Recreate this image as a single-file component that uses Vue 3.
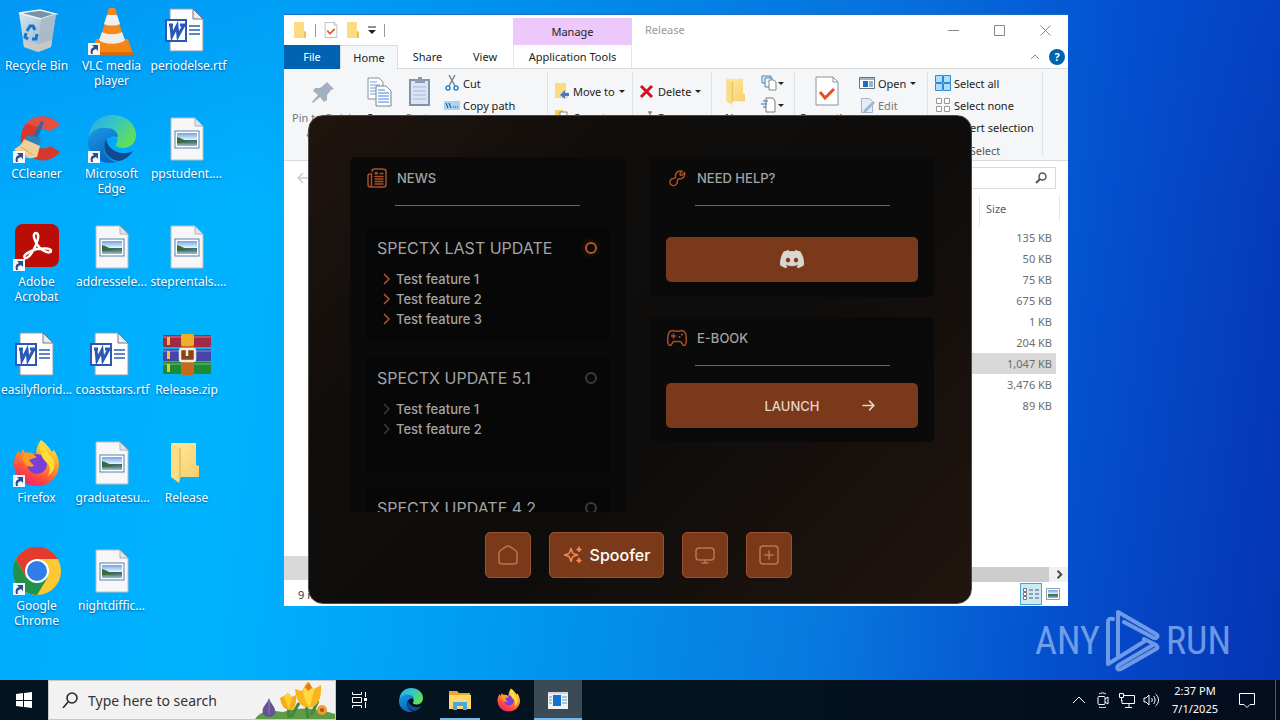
<template>
  <div class="screen">
    <!-- Shared icon sheet -->
    <svg class="sprite" aria-hidden="true">
      <defs>
        <linearGradient id="g-edge-a" x1="0" y1="0" x2="1" y2="0.6">
          <stop offset="0" stop-color="#2aa8e8" />
          <stop offset="0.5" stop-color="#35c6c8" />
          <stop offset="1" stop-color="#62e055" />
        </linearGradient>
        <linearGradient id="g-edge-b" x1="0" y1="0" x2="0.4" y2="1">
          <stop offset="0" stop-color="#1a9be6" />
          <stop offset="1" stop-color="#0c64c0" />
        </linearGradient>
        <linearGradient id="g-fox" x1="0.8" y1="0" x2="0.3" y2="1">
          <stop offset="0" stop-color="#fff24a" />
          <stop offset="0.4" stop-color="#ffa027" />
          <stop offset="0.75" stop-color="#ff4a3c" />
          <stop offset="1" stop-color="#e5227a" />
        </linearGradient>
        <linearGradient id="g-folder" x1="0" y1="0" x2="1" y2="1">
          <stop offset="0" stop-color="#ffe9a2" />
          <stop offset="1" stop-color="#f6cf69" />
        </linearGradient>
        <linearGradient id="g-photo" x1="0" y1="0" x2="0" y2="1">
          <stop offset="0" stop-color="#6ba5e8" />
          <stop offset="0.5" stop-color="#e3f1fb" />
          <stop offset="0.55" stop-color="#3f6b52" />
          <stop offset="0.75" stop-color="#4f7f80" />
          <stop offset="1" stop-color="#9cc3d8" />
        </linearGradient>
        <linearGradient id="g-bin" x1="0" y1="0" x2="1" y2="1">
          <stop offset="0" stop-color="#d7e8f3" />
          <stop offset="1" stop-color="#8fa9ba" />
        </linearGradient>
      </defs>

      <symbol id="i-bin" viewBox="0 0 48 48">
        <path d="M6 6l21-3 16 4-5 33-13 5-14-5z" fill="url(#g-bin)" />
        <path d="M6 6l21-3 16 4-15 5z" fill="#7a93a4" stroke="#eef5fa" stroke-width="1.5" />
        <path d="M28 12l-3 33 13-5 5-33z" fill="#a9bbc8" />
        <path d="M10 34l15 3 14-4-1 7-13 5-14-5z" fill="#d4cdc6" opacity="0.7" />
        <path d="M14 24l3-5h3l2 4M24 27l-1 5h-4M15 32l-3-2 1-4" fill="none" stroke="#1673d0" stroke-width="3" />
      </symbol>

      <symbol id="i-vlc" viewBox="0 0 48 48">
        <path d="M8 32h32l5 15H3z" fill="#f58410" />
        <path d="M3 45h42v3H3z" fill="#d96a08" />
        <path d="M21 1h6l10 35c-5 5-21 5-26 0z" fill="#f5871c" />
        <path d="M19 8h10l3 9c-4 2-12 2-16 0z" fill="#f1f1ef" />
        <path d="M14 25c5 3 15 3 20 0l3 8c-5 5-21 5-26 0z" fill="#ededeb" />
      </symbol>

      <symbol id="i-ccleaner" viewBox="0 0 48 48">
        <path d="M47 10A22 22 0 1 0 47 37l-10-6A10 10 0 1 1 37 16z" fill="#d8382c" />
        <path d="M47 10C38-1 20-1 13 8l24 8z" fill="#ea5546" opacity="0.8" />
        <path d="M28 6l3 1-7 18-5-2z" fill="#2a6ca8" />
        <path d="M14 20l14 3-2 8-14-6z" fill="#2f81bd" />
        <path d="M11 24l16 7-3 11c-8 3-17 0-23-8 5-2 8-5 10-10z" fill="#f0cf98" />
        <path d="M8 32l12 8M6 36l9 6" stroke="#d8a861" />
      </symbol>

      <symbol id="i-edge" viewBox="0 0 48 48">
        <path d="M1 20C3 8 12 0 24 0c14 0 24 9 24 20 0 9-7 13-13 13-5 0-8-2-7-4 3-3 2-12-9-12C10 17 4 22 1 29z" fill="url(#g-edge-a)" />
        <path d="M0 26c1-9 9-14 18-13 9 0 12 5 12 9-8-3-14 3-14 10 0 8 6 14 13 15C12 51 0 40 0 26z" fill="url(#g-edge-b)" />
        <path d="M18 24c-5 11 2 21 13 22 6-1 11-5 14-10-9 5-24 2-27-12z" fill="#114a8e" />
      </symbol>

      <symbol id="i-acrobat" viewBox="0 0 48 48">
        <rect x="2" y="1" width="44" height="43" rx="8" fill="#b90d06" />
        <path d="M23 10c4 0 2 9-2 16-3 6-7 10-9 9-3-3 5-7 12-9 7-1 14-1 14 2s-8 1-12-4c-5-6-7-14-3-14z" fill="none" stroke="#fff" stroke-width="2.5" />
      </symbol>

      <symbol id="i-word" viewBox="2 0 48 48">
        <path d="M9 2h23l10 10v32H9z" fill="#fdfdfd" stroke="#8f9aa8" />
        <path d="M32 2v10h10z" fill="#e8edf3" stroke="#6f7a88" />
        <path d="M28 19h11M28 23h11M28 27h11" stroke="#2b5db5" stroke-width="1.5" />
        <rect x="5" y="13" width="20" height="21" fill="#fff" stroke="#2a58b4" stroke-width="2" />
        <path d="M8 18h4M10 18l1 11 5-10 1 10 6-11h-4" fill="none" stroke="#2a58b4" stroke-width="3" />
      </symbol>

      <symbol id="i-image" viewBox="0 0 48 48">
        <path d="M8 3h24l8 8v34H8z" fill="#f7f7f7" stroke="#b7bdc4" />
        <path d="M32 3v8h8z" fill="#dfe5ec" stroke="#a9b2bc" />
        <rect x="12" y="16" width="24" height="17" fill="#fff" stroke="#5a7ea8" />
        <rect x="14" y="18" width="20" height="13" fill="url(#g-photo)" />
        <path d="M14 22c4 1 8 4 14 5l-14 1z" fill="#3a6b3e" />
      </symbol>

      <symbol id="i-zip" viewBox="0 0 48 48">
        <rect x="0" y="4" width="48" height="12" rx="1" fill="#a22846" />
        <rect x="0" y="18" width="48" height="12" rx="1" fill="#4744a8" />
        <rect x="0" y="31" width="48" height="12" rx="1" fill="#1c8b34" />
        <path d="M0 6h48M0 20h48M0 33h48" stroke="#fff" stroke-opacity="0.2" stroke-width="2" />
        <path d="M4 6h3v8H4zM4 20h3v8H4zM4 33h3v8H4z" fill="#f2c230" />
        <rect x="18" y="3" width="13" height="41" fill="#c46a1d" />
        <rect x="18" y="3" width="13" height="12" rx="2" fill="#edae2c" />
        <rect x="17" y="18" width="15" height="12" rx="2" fill="#8a4514" stroke="#f1ece0" stroke-width="2.5" />
        <path d="M24 17v8" stroke="#f1ece0" stroke-width="2.5" />
      </symbol>

      <symbol id="i-folder" viewBox="0 0 48 48">
        <path d="M9 4h24v22l3 1v11H13z" fill="url(#g-folder)" />
        <path d="M8 4l8 5v35l-8-6z" fill="#f9dc86" />
        <path d="M16 9l2-1v29l-2 7z" fill="#eac461" />
      </symbol>

      <symbol id="i-firefox" viewBox="0 0 48 48">
        <path d="M28 1c7 5 9 9 11 12l2-2c5 8 6 15 4 21-3 9-11 15-21 15C11 47 1 38 1 25c0-6 2-10 5-13l1 4 3-6 2 4c4-1 8 0 11 2 0-5 1-10 5-15z" fill="url(#g-fox)" />
        <circle cx="24" cy="25" r="10" fill="#7a3fd8" />
        <path d="M10 14c5-1 9 0 14 4l-8 3 5 6c-5 2-10-1-11-6z" fill="#ff9a22" />
        <path d="M28 3c5 6 5 10 12 17 3 6 1 13-5 17 3-7 2-11-2-14-4-4-7-9-5-20z" fill="#ffdc3a" />
      </symbol>

      <symbol id="i-chrome" viewBox="0 0 48 48">
        <circle cx="24" cy="24" r="24" fill="#fcc934" />
        <path d="M3 12A24 24 0 0 1 45 12H24L13 30z" fill="#e33b2e" />
        <path d="M3 12a24 24 0 0 0 21 36l11-18-11 6-11-6z" fill="#22914a" />
        <circle cx="24" cy="24" r="12" fill="#fff" />
        <circle cx="24" cy="24" r="10" fill="#2f7de8" />
      </symbol>

      <symbol id="i-shortcut" viewBox="0 0 12 12">
        <path d="M0 0h12v12H0z" fill="#f5f8fb" />
        <path d="M3 11c-1-4 0-6 3-7L4 2h6v6L8 6C5 7 4 8 5 11z" fill="#2a4f8c" />
      </symbol>

      <symbol id="i-doc" viewBox="0 0 24 30">
        <path d="M1 1h17l5 5v23H1z" fill="#fff" stroke="#8b9097" />
        <path d="M18 1v5h5" fill="none" stroke="#8b9097" />
        <path d="M5 16l5 6 9-9" fill="none" stroke="#e2512a" stroke-width="3" />
      </symbol>

      <symbol id="i-yellow" viewBox="0 0 14 16">
        <path d="M1 0h10v9l2 1v6H1z" fill="#fbdc83" />
        <path d="M11 9l2 1v6h-2z" fill="#eac15c" />
      </symbol>
    </svg>

    <main class="desktop">
      <ul class="shortcuts">
        <li v-for="item in shortcuts" :key="item.label" class="shortcut">
          <span class="shortcut-art">
            <svg class="shortcut-icon"><use :href="'#i-' + item.icon" /></svg>
            <svg v-if="item.link" class="shortcut-badge"><use href="#i-shortcut" /></svg>
          </span>
          <span class="shortcut-label">{{ item.label }}</span>
        </li>
      </ul>

      <!-- File Explorer -->
      <section class="explorer">
        <header class="titlebar">
          <div class="quick-access">
            <svg class="qa-folder"><use href="#i-yellow" /></svg>
            <i class="qa-sep" />
            <svg class="qa-doc"><use href="#i-doc" /></svg>
            <svg class="qa-folder"><use href="#i-yellow" /></svg>
            <svg class="qa-more" viewBox="0 0 8 8"><path d="M0 1h8" stroke="#222" /><path d="M0 4h8L4 8z" fill="#222" /></svg>
            <i class="qa-sep" />
          </div>
          <div class="context-title">Manage</div>
          <div class="window-title">Release</div>
          <div class="window-buttons">
            <button type="button" aria-label="Minimize"><svg viewBox="0 0 11 11"><path d="M0 5.5h11" /></svg></button>
            <button type="button" aria-label="Maximize"><svg viewBox="0 0 11 11"><path d="M0.5 0.5h10v10h-10z" /></svg></button>
            <button type="button" aria-label="Close"><svg viewBox="0 0 11 11"><path d="M0.5 0.5l10 10M10.5 0.5l-10 10" /></svg></button>
          </div>
        </header>

        <nav class="tabs">
          <button type="button" class="tab tab-file">File</button>
          <button type="button" class="tab tab-home">Home</button>
          <button type="button" class="tab tab-share">Share</button>
          <button type="button" class="tab tab-view">View</button>
          <button type="button" class="tab tab-tools">Application Tools</button>
          <svg class="collapse" viewBox="0 0 8 6"><path d="M0 5l4-4 4 4" fill="none" stroke="#888" /></svg>
          <button type="button" class="help" aria-label="Help">?</button>
        </nav>

        <div class="ribbon">
          <div class="group group-clipboard">
            <button type="button" class="big big-pin">
              <svg viewBox="0 0 32 32"><path d="M20 6l7 7-3 1-4 5v5l-3 2-4-5-7 6-1-1 6-7-5-4 2-3h5l5-4z" fill="#a3b0be" /></svg>
              <span>Pin to Quick access</span>
            </button>
            <button type="button" class="big big-copy">
              <svg viewBox="0 0 32 32">
                <path d="M5 2h11l4 4v17H5z" fill="#fff" stroke="#8b9097" />
                <path d="M7 6h7M7 9h10M7 12h10M7 15h10M7 18h10" stroke="#6fa0dc" />
                <path d="M13 10h10l5 5v15H13z" fill="#fff" stroke="#7c8289" />
                <path d="M15 14h7M15 17h11M15 20h11M15 23h11M15 26h11" stroke="#3c86dc" />
              </svg>
              <span>Copy</span>
            </button>
            <button type="button" class="big big-paste">
              <svg viewBox="0 0 32 32">
                <rect x="6" y="4" width="19" height="25" fill="#dae4f2" stroke="#8294ac" stroke-width="2" />
                <path d="M11 3h3V1h4v2h3v4H11z" fill="#8d9bb0" />
                <path d="M9 11h13M9 15h13M9 19h13M9 23h13" stroke="#a7b9d4" />
              </svg>
              <span>Paste</span>
            </button>
            <div class="stack">
              <button type="button" class="small">
                <svg viewBox="0 0 16 16">
                  <path d="M5 0l6 11M11 0L5 11" stroke="#7c8790" stroke-width="1.5" />
                  <circle cx="4" cy="13" r="2" fill="none" stroke="#2387d0" stroke-width="1.5" />
                  <circle cx="12" cy="13" r="2" fill="none" stroke="#2387d0" stroke-width="1.5" />
                </svg>Cut
              </button>
              <button type="button" class="small">
                <svg viewBox="0 0 16 16">
                  <rect x="0" y="4" width="16" height="9" fill="#a9d5f5" />
                  <path d="M2 6l2 5M5 6l2 5M9 10h1M11 10h1M13 10h1" stroke="#16436d" />
                </svg>Copy path
              </button>
            </div>
          </div>

          <div class="group group-move">
            <div class="stack wide">
              <button type="button" class="small">
                <svg viewBox="0 0 16 16"><path d="M1 0h11v9h2v6H1z" fill="#fbdb7d" /><path d="M15 10h-4V7l-5 5 5 4v-3h4z" fill="#3f7ad0" /></svg>Move to<i class="caret" />
              </button>
              <button type="button" class="small">
                <svg viewBox="0 0 16 16"><path d="M1 1h8v13H1z" fill="#f5cf5e" /><path d="M6 3h7v10H6z" fill="#fff" stroke="#888" /></svg>Copy to
              </button>
            </div>
          </div>

          <div class="group group-delete">
            <div class="stack wide">
              <button type="button" class="small">
                <svg viewBox="0 0 16 16"><path d="M2 3l11 11M13 3L2 14" stroke="#d5101e" stroke-width="3" /></svg>Delete<i class="caret" />
              </button>
              <button type="button" class="small">
                <svg viewBox="0 0 16 16"><path d="M9 3h4M11 3v10" stroke="#555" /></svg>Rename
              </button>
            </div>
          </div>

          <div class="group group-new">
            <button type="button" class="big big-new">
              <svg viewBox="0 0 48 48"><use href="#i-folder" /></svg>
              <span>New folder</span>
            </button>
            <div class="stack">
              <button type="button" class="small tool">
                <svg viewBox="0 0 16 16">
                  <path d="M1 1h9v7H1z" fill="#d5ecf9" stroke="#4a84aa" />
                  <path d="M4 3h7v9H4z" fill="#eef7fc" stroke="#4a84aa" />
                  <path d="M8 5h5l2 2v8H8z" fill="#fff" stroke="#888" />
                </svg><i class="caret" />
              </button>
              <button type="button" class="small tool">
                <svg viewBox="0 0 16 16">
                  <path d="M5 1h7l2 3v11H5z" fill="#fff" stroke="#777" />
                  <path d="M2 4h5M0 7h6M2 10h3" stroke="#2b6fb4" />
                </svg><i class="caret" />
              </button>
            </div>
          </div>

          <div class="group group-open">
            <button type="button" class="big big-props">
              <svg viewBox="-1 0 26 32"><use href="#i-doc" width="24" height="30" /></svg>
              <span>Properties</span>
            </button>
            <div class="stack">
              <button type="button" class="small">
                <svg viewBox="0 0 16 16">
                  <path d="M0.5 2.5h15v11H0.5z" fill="#fff" stroke="#6c757d" />
                  <path d="M1 3h14v2H1z" fill="#9eb4c6" />
                  <path d="M4 6h5v6H4z" fill="#1b6fc0" />
                  <path d="M10 7h4M10 9h4M10 11h4" stroke="#1b6fc0" />
                </svg>Open<i class="caret" />
              </button>
              <button type="button" class="small muted">
                <svg viewBox="0 0 16 16">
                  <path d="M2.5 1.5h8l3 3v11h-11z" fill="#e4ecf7" stroke="#a5b4c8" />
                  <path d="M14 4l2 2-9 9-3 1 1-3z" fill="#9fb5d2" />
                </svg>Edit
              </button>
            </div>
          </div>

          <div class="group group-select">
            <div class="stack">
              <button type="button" class="small">
                <svg viewBox="0 0 16 16"><path d="M0.5 0.5h7v7h-7zM8.5 0.5h7v7h-7zM0.5 8.5h7v7h-7zM8.5 8.5h7v7h-7z" fill="#aedcfb" stroke="#2c8bd6" /></svg>Select all
              </button>
              <button type="button" class="small">
                <svg viewBox="0 0 16 16"><path d="M1.5 1.5h5v5h-5zM9.5 1.5h5v5h-5zM1.5 9.5h5v5h-5zM9.5 9.5h5v5h-5z" fill="#fff" stroke="#999" /></svg>Select none
              </button>
              <button type="button" class="small">
                <svg viewBox="0 0 16 16"><path d="M1.5 1.5h5v5h-5zM9.5 9.5h5v5h-5z" fill="#aedcfb" stroke="#2c8bd6" /></svg>Invert selection
              </button>
            </div>
            <span class="group-name">Select</span>
          </div>
        </div>

        <div class="address-row">
          <svg class="back" viewBox="0 0 12 12"><path d="M12 6H1M6 1L1 6l5 5" fill="none" stroke="#ccc" stroke-width="1.5" /></svg>
          <label class="file-search">
            <input type="search" aria-label="Search Release" />
            <svg viewBox="0 0 12 12"><circle cx="7.5" cy="4.5" r="3.5" fill="none" stroke="#555" stroke-width="1.5" /><path d="M5 7l-4 4" stroke="#555" stroke-width="2" /></svg>
          </label>
        </div>

        <div class="panes">
          <div class="tree"><div class="tree-selected" /></div>
          <div class="listing">
            <table class="files">
              <thead>
                <tr><td /><th scope="col">Size</th><td class="edge" /></tr>
              </thead>
              <tbody>
                <tr v-for="(size, i) in sizes" :key="i" :class="{ selected: i === 6 }">
                  <td /><td class="size">{{ size }}</td><td class="edge" />
                </tr>
              </tbody>
            </table>
            <div class="hscroll">
              <div class="thumb" />
              <svg viewBox="0 0 20 16"><path d="M9 4l4 4-4 4" fill="none" stroke="#444" stroke-width="2" /></svg>
            </div>
          </div>
        </div>

        <footer class="status">
          <span>9 items</span>
          <div class="views">
            <button type="button" class="view active" aria-label="Details">
              <svg viewBox="0 0 18 14"><path d="M1.5 1.5h3v3h-3zM1.5 5.5h3v3h-3zM1.5 9.5h3v3h-3z" fill="#fff" stroke="#777" /><path d="M7 3h4M13 3h4M7 7h4M13 7h4M7 11h4M13 11h4" stroke="#556" /></svg>
            </button>
            <button type="button" class="view" aria-label="Large icons">
              <svg viewBox="0 0 18 14"><path d="M2.5 1.5h13v11h-13z" fill="#fff" stroke="#99a" /><rect x="4" y="3" width="10" height="8" fill="url(#g-photo)" /></svg>
            </button>
          </div>
        </footer>
      </section>

      <!-- Launcher -->
      <section class="launcher">
        <div class="boards">
          <article class="card news">
            <h2 class="card-head">
              <svg viewBox="0 0 20 20">
                <g fill="none" stroke="currentColor" stroke-width="1.5" stroke-linecap="round">
                  <path d="M5 3.5C5 2 6 1 7.5 1h8C18 1 19 2 19 3.5v13c0 1.500-1 2.500-2.500 2.500H3.500C2 19 1 18 1 16.500V8c0-1.500.5-2 2-2h1.500v10.500C4.500 18 4 19 3 19" />
                  <path d="M8 8.500h8M8 11h8M8 13.500h8M8 16h8M13 5.500h3" />
                </g>
                <rect x="7.500" y="4" width="3.500" height="2.500" rx="1" fill="currentColor" />
              </svg>
              NEWS
            </h2>
            <div class="rule" />
            <div v-for="post in posts" :key="post.title" class="post" :class="{ latest: post.latest }">
              <div class="post-head">
                <h3>{{ post.title }}</h3>
                <i class="ring" />
              </div>
              <ul>
                <li v-for="line in post.lines" :key="line">
                  <svg viewBox="0 0 7 12"><path d="M1 1l5 5-5 5" /></svg>{{ line }}
                </li>
              </ul>
            </div>
          </article>

          <div class="side">
            <article class="card help-card">
              <h2 class="card-head">
                <svg viewBox="0 0 24 24">
                  <path d="M15.500 6.500l.4 1.800 1.900.4 3.300-3.200c1.200 4.500-2.300 8.200-6.600 7.500-1.200-.1-2 .7-2 1.800.2 3.700-1.700 6.400-4.800 6.400-3.400 0-5.200-3.500-3.700-6.300 1-1.900 2.700-2.300 4.600-2.500 1.300-.2 1.800-1 1.600-2.200-.6-4.300 3.200-7.800 8-6.400z" fill="none" stroke="currentColor" stroke-width="1.800" stroke-linejoin="round" />
                </svg>
                NEED HELP?
              </h2>
              <div class="rule" />
              <button type="button" class="action" aria-label="Discord">
                <svg class="discord" viewBox="0 0 24 19">
                  <path fill="#d9d6cf" fill-rule="evenodd" d="M20.300 1.600A19.800 19.800 0 0 0 15.400 0l-.7 1.300a18 18 0 0 0-5.400 0L8.600 0a19.700 19.700 0 0 0-4.900 1.600C.6 6.200-.3 10.700.1 15.200a20 20 0 0 0 6 3l1.300-2.100-1.900-.9.500-.4c3.900 1.800 8.200 1.800 12 0l.5.4-1.900.9 1.300 2.100a19.900 19.900 0 0 0 6-3c.5-5.200-.8-9.700-3.600-13.600zM8 12.500c-1.200 0-2.200-1.100-2.200-2.400S6.800 7.700 8 7.700s2.200 1.100 2.200 2.400S9.200 12.500 8 12.500zm8 0c-1.200 0-2.200-1.100-2.200-2.400s1-2.400 2.200-2.400 2.200 1.100 2.200 2.400-1 2.400-2.200 2.400z" />
                </svg>
              </button>
            </article>

            <article class="card ebook-card">
              <h2 class="card-head">
                <svg viewBox="0 0 20 20">
                  <g fill="none" stroke="currentColor" stroke-width="1.500" stroke-linecap="round" stroke-linejoin="round">
                    <path d="M5 2.500c1.500-.5 2 .7 3 .7h4c1 0 1.500-1.200 3-.7 3 .5 4.300 3 4.300 8.500 0 4-.5 6.500-2.300 6.500-2.200 0-2-4-4-4H7c-2 0-1.800 4-4 4-1.800 0-2.300-2.500-2.300-6.500C.7 5.500 2 3 5 2.500z" />
                    <path d="M6.500 6v4M4.500 8h4" />
                  </g>
                  <circle cx="15" cy="6.500" r="1" fill="currentColor" /><circle cx="12.500" cy="9" r="1" fill="currentColor" />
                </svg>
                E-BOOK
              </h2>
              <div class="rule" />
              <button type="button" class="action">
                <span class="launch-text">LAUNCH</span>
                <svg class="arrow" viewBox="0 0 12 10"><path d="M1 5h10M7 1l4 4-4 4" fill="none" stroke="currentColor" stroke-width="1.500" stroke-linecap="round" stroke-linejoin="round" /></svg>
              </button>
            </article>
          </div>
        </div>

        <nav class="dock">
          <button type="button" aria-label="Home">
            <svg viewBox="0 0 20 20"><path d="M1 8.500c0-1.500.5-2.200 1.500-3L8 1.600c1.300-.9 2.700-.9 4 0l5.500 3.900c1 .8 1.500 1.500 1.500 3V16c0 2-1 3-3 3H4c-2 0-3-1-3-3z" /></svg>
          </button>
          <button type="button" class="current">
            <svg viewBox="0 0 20 20">
              <path d="M8 3.500l1.300 3.800c.3.700.7 1.100 1.400 1.400l3.800 1.300-3.800 1.300c-.7.300-1.100.7-1.400 1.400L8 16.500l-1.300-3.800c-.3-.7-.7-1.100-1.400-1.400L1.500 10l3.800-1.300c.7-.3 1.100-.7 1.400-1.400z" />
              <path d="M16 2l.8 1.700L18.500 4.500l-1.700.8L16 7l-.8-1.700-1.700-.8 1.700-.8zM16 13l.8 1.700 1.700.8-1.700.8L16 18l-.8-1.700-1.700-.8 1.700-.8z" fill="currentColor" stroke-width="1" />
            </svg>
            Spoofer
          </button>
          <button type="button" aria-label="Display">
            <svg viewBox="0 0 20 20"><rect x="1" y="3" width="18" height="12" rx="3" /><path d="M10 15v3M7 18h6" /></svg>
          </button>
          <button type="button" aria-label="Add">
            <svg viewBox="0 0 20 20"><rect x="1" y="1" width="18" height="18" rx="3" /><path d="M10 6v8M6 10h8" /></svg>
          </button>
        </nav>
      </section>

      <div class="watermark">
        <span>ANY</span>
        <svg viewBox="0 0 54 62" fill="none" stroke="currentColor" stroke-width="4" stroke-linejoin="round" stroke-linecap="round">
          <path d="M7 9c-4-1-5 1-5 3v42l37-23M12 46V2l38 22c3 2 1 5-2 4L18 12M38 29l12 6c2 2 2 3 0 4L15 59c-4 2-5-2-2-4l34-20" />
        </svg>
        <span>RUN</span>
      </div>
    </main>

    <footer class="taskbar">
      <button type="button" class="task start" aria-label="Start">
        <svg viewBox="0 0 16 16" fill="#fff"><path d="M0 2l7-1v7H0zM8 1l8-1v8H8zM0 9h7v6l-7-1zM8 9h8v7l-8-1z" /></svg>
      </button>
      <label class="search">
        <svg class="lens" viewBox="0 0 16 16"><circle cx="10" cy="6" r="5" fill="none" stroke="#222" stroke-width="1.5" /><path d="M6 10l-5 6" stroke="#222" stroke-width="1.5" /></svg>
        <input type="text" placeholder="Type here to search" aria-label="Type here to search" />
        <svg class="flowers" viewBox="0 0 80 38">
          <path d="M0 38c6-9 16-9 28-7 18-6 34-4 52 2v5z" fill="#5f9a48" />
          <path d="M34 37L33 18M53 37L50 14M36 36l8-14M56 34l7-14" stroke="#3f8a34" stroke-width="3" />
          <path d="M8 33c-2-8 4-9 6-16 1 6 8 9 6 16-3 4-9 4-12 0z" fill="#65538f" />
          <path d="M14 18v16" stroke="#8e7cb5" />
          <path d="M25 17l4-2 4-3 4 4 4-2c1 9-2 15-6 15-6 0-9-5-10-12z" fill="#f7ac18" />
          <path d="M29 16l4-4 4 5-3 12z" fill="#ffcf35" />
          <path d="M40 8l7 2 5-9 7 7 7-4c1 13-3 22-12 23-9-1-13-8-14-19z" fill="#fbb51c" />
          <path d="M48 10l5-9 6 8-4 17c-4-3-6-9-7-16z" fill="#ffd943" />
          <path d="M50 6l4-5 3 6-4 3z" fill="#e87716" />
          <circle cx="67" cy="29" r="5" fill="#f59a2b" /><circle cx="67" cy="29" r="2" fill="#a3541a" />
        </svg>
      </label>
      <button type="button" class="task view-tasks" aria-label="Task View">
        <svg viewBox="0 0 18 16" fill="none" stroke="#fff"><path d="M1.500 0v2.500h9V0M1.500 16v-2.500h9V16M1.500 5.500h9v5h-9zM14.500 0v5M14.500 10v6" /><rect x="13.500" y="6.500" width="2" height="2" fill="#fff" /></svg>
      </button>
      <div class="apps">
        <button type="button" class="task" aria-label="Edge"><svg class="app-icon"><use href="#i-edge" /></svg></button>
        <button type="button" class="task running" aria-label="File Explorer">
          <svg class="app-icon" viewBox="0 0 24 24"><path d="M1 3h8l2 2h11v5H1z" fill="#e9a92a" /><path d="M1 7h22v14H1z" fill="#ffd76a" /><path d="M5 22v-8h14v8h-4v-4H9v4z" fill="#47a7e3" /></svg>
        </button>
        <button type="button" class="task" aria-label="Firefox"><svg class="app-icon"><use href="#i-firefox" /></svg></button>
        <button type="button" class="task running focused" aria-label="Release">
          <svg class="app-icon" viewBox="0 0 24 24"><path d="M2 4h20v17H2z" fill="#f2f2f2" /><path d="M2 4h20v2H2z" fill="#d0d7de" /><path d="M7 7h8v11H7z" fill="#1273cf" /><path d="M3 9h3M3 12h3M3 15h3M16 9h5M16 12h5M16 15h5" stroke="#6b96b8" /></svg>
        </button>
      </div>
      <div class="tray">
        <svg viewBox="0 0 16 16"><path d="M2 11l6-6 6 6" /></svg>
        <svg viewBox="0 0 16 16"><rect x="3" y="4.500" width="7" height="8" rx="1" /><path d="M10 7l3-2v7l-3-2M4 2c2-1.500 5-1.500 7 0M4 15c2 1 5 1 7 0" /></svg>
        <svg viewBox="0 0 16 16"><path d="M5 3.500h10.500v8H3V8M10 12v3M6 15.500h7M0.500 1.500h4v4h-4zM2.500 6v3" /></svg>
        <svg viewBox="0 0 16 16"><path d="M1 6h2l3-3v10l-3-3H1zM8.500 6c1 1 1 3 0 4M10.500 4c2 2 2 6 0 8M12.500 2c4 3 4 9 0 12" /></svg>
        <div class="clock"><span>2:37 PM</span><span>7/1/2025</span></div>
        <svg class="note" viewBox="0 0 18 18"><path d="M1.500 2.500h15v11h-4.500l-3 3-3-3h-4.500z" /></svg>
      </div>
    </footer>
  </div>
</template>

<script setup>
const shortcuts = [
  { label: 'Recycle Bin', icon: 'bin' },
  { label: 'CCleaner', icon: 'ccleaner', link: true },
  { label: 'Adobe Acrobat', icon: 'acrobat', link: true },
  { label: 'easilyflorid...', icon: 'word' },
  { label: 'Firefox', icon: 'firefox', link: true },
  { label: 'Google Chrome', icon: 'chrome', link: true },
  { label: 'VLC media player', icon: 'vlc', link: true },
  { label: 'Microsoft Edge', icon: 'edge', link: true },
  { label: 'addressele...', icon: 'image' },
  { label: 'coaststars.rtf', icon: 'word' },
  { label: 'graduatesu...', icon: 'image' },
  { label: 'nightdiffic...', icon: 'image' },
  { label: 'periodelse.rtf', icon: 'word' },
  { label: 'ppstudent....', icon: 'image' },
  { label: 'steprentals....', icon: 'image' },
  { label: 'Release.zip', icon: 'zip' },
  { label: 'Release', icon: 'folder' },
]

const sizes = ['135 KB', '50 KB', '75 KB', '675 KB', '1 KB', '204 KB', '1,047 KB', '3,476 KB', '89 KB']

const posts = [
  { title: 'SPECTX LAST UPDATE', latest: true, lines: ['Test feature 1', 'Test feature 2', 'Test feature 3'] },
  { title: 'SPECTX UPDATE 5.1', lines: ['Test feature 1', 'Test feature 2'] },
  { title: 'SPECTX UPDATE 4.2', lines: [] },
]
</script>

<style>
body {
  margin: 0;
}
</style>

<style scoped>
.screen {
  display: flex;
  flex-direction: column;
  min-height: 100vh;
  font-family: 'Noto Sans', 'Open Sans', sans-serif;
  font-size: 11px;
  color: #222;
}

.screen *,
.screen *::before,
.screen *::after {
  box-sizing: border-box;
}

button,
input {
  font: inherit;
  color: inherit;
  border: 0;
  padding: 0;
  margin: 0;
  background: none;
}

ul {
  list-style: none;
  margin: 0;
  padding: 0;
}

svg {
  flex-shrink: 0;
}

.sprite {
  position: absolute;
  width: 0;
  height: 0;
}

/* ── Desktop ───── */
.desktop {
  position: relative;
  flex: 1;
  background:
    linear-gradient(180deg, rgba(0, 80, 215, 0.2), rgba(0, 80, 215, 0) 30%),
    linear-gradient(97deg, #00a9fc 0%, #00b3ff 20%, #009af2 42%, #0878df 66%, #0450ce 83%, #0434b4 100%);
}

.shortcuts {
  display: grid;
  grid-auto-flow: column;
  grid-template-rows: repeat(6, 108px);
  grid-auto-columns: 75px;
}

.shortcut {
  display: flex;
  flex-direction: column;
  align-items: center;
  gap: 3px;
  padding: 7px 2px 0 0;
}

.shortcut-art {
  position: relative;
  width: 48px;
  height: 48px;
}

.shortcut-icon {
  width: 48px;
  height: 48px;
}

.shortcut-badge {
  position: absolute;
  left: 0;
  bottom: 0;
  width: 12px;
  height: 12px;
}

.shortcut-label {
  max-width: 72px;
  font-size: 12px;
  line-height: 15px;
  text-align: center;
  color: #fff;
  text-shadow: 0 1px 2px rgba(0, 40, 90, 0.7);
}

/* ── Explorer ───── */
.explorer {
  position: absolute;
  inset: 14px 212px 74px 284px;
  display: flex;
  flex-direction: column;
  background: #fff;
  border-top: 1px solid #1a6fc4;
}

.titlebar {
  display: flex;
  height: 30px;
}

.quick-access {
  display: flex;
  align-items: center;
  gap: 8px;
  width: 229px;
  padding-left: 9px;
}

.qa-folder {
  width: 14px;
  height: 16px;
}

.qa-doc {
  width: 14px;
  height: 16px;
}

.qa-more {
  width: 8px;
  height: 8px;
}

.qa-sep {
  width: 1px;
  height: 13px;
  background: #999;
}

.context-title {
  width: 119px;
  margin-top: 3px;
  line-height: 27px;
  text-align: center;
  background: #ecc8fb;
}

.window-title {
  padding-left: 13px;
  line-height: 30px;
  color: #999;
}

.window-buttons {
  display: flex;
  margin-left: auto;
}

.window-buttons button {
  display: grid;
  place-items: center;
  width: 46px;
}

.window-buttons svg {
  width: 11px;
  height: 11px;
  fill: none;
  stroke: #888;
}

.tabs {
  display: flex;
  align-items: center;
  height: 24px;
  border-bottom: 1px solid #dadbdc;
}

.tab {
  height: 24px;
}

.tab-file {
  width: 56px;
  color: #fff;
  background: #0063b1;
}

.tab-home {
  width: 58px;
  background: #f5f6f7;
  border: 1px solid #dadbdc;
  border-bottom: 0;
}

.tab-share {
  width: 59px;
}

.tab-view {
  width: 56px;
}

.tab-tools {
  width: 119px;
  border-left: 1px solid #e5e5e5;
  border-right: 1px solid #e5e5e5;
}

.collapse {
  width: 8px;
  height: 6px;
  margin-left: auto;
}

.help {
  width: 16px;
  height: 16px;
  margin: 0 3px 0 10px;
  line-height: 16px;
  font-weight: 700;
  color: #fff;
  background: #0063b1;
  border-radius: 50%;
}

.ribbon {
  display: flex;
  height: 92px;
  padding: 3px 0 4px;
  background: #f5f6f7;
  border-bottom: 1px solid #dadbdc;
}

.group {
  position: relative;
  display: flex;
  border-right: 1px solid #e0e2e4;
}

.group-clipboard {
  width: 264px;
}

.group-move {
  width: 85px;
  padding-left: 6px;
}

.group-delete {
  width: 79px;
  padding-left: 6px;
}

.group-new {
  width: 83px;
}

.group-open {
  width: 133px;
}

.group-select {
  width: 115px;
  padding-left: 7px;
}

.big {
  display: flex;
  flex-direction: column;
  align-items: center;
  gap: 2px;
  padding-top: 4px;
  line-height: 15px;
}

.big svg {
  width: 32px;
  height: 32px;
}

.big-pin {
  width: 78px;
  color: #777;
}

.big-copy {
  width: 34px;
}

.big-paste {
  width: 48px;
  color: #777;
}

.big-new {
  width: 49px;
}

.big-props {
  width: 64px;
}

.stack {
  display: flex;
  flex-direction: column;
}

.stack.wide {
  gap: 4px;
  padding-top: 8px;
}

.small {
  display: flex;
  align-items: center;
  gap: 3px;
  height: 22px;
  white-space: nowrap;
}

.small svg {
  width: 16px;
  height: 16px;
}

.small.tool {
  gap: 0;
}

.muted {
  color: #777;
}

.caret {
  margin-left: 1px;
  border: 3px solid transparent;
  border-top-color: #222;
  border-bottom: 0;
}

.group-name {
  position: absolute;
  left: 0;
  right: 0;
  bottom: -4px;
  line-height: 18px;
  text-align: center;
  color: #555;
}

.address-row {
  display: flex;
  align-items: center;
  justify-content: space-between;
  height: 34px;
  padding: 0 12px 0 13px;
}

.back {
  width: 12px;
  height: 12px;
}

.file-search {
  display: flex;
  align-items: center;
  width: 200px;
  height: 22px;
  padding-right: 8px;
  border: 1px solid #d9d9d9;
}

.file-search input {
  flex: 1;
  min-width: 0;
}

.file-search svg {
  width: 12px;
  height: 12px;
}

.panes {
  display: flex;
  flex: 1;
  min-height: 0;
}

.tree {
  display: flex;
  flex-direction: column;
  justify-content: flex-end;
  width: 170px;
  padding-bottom: 2px;
}

.tree-selected {
  height: 24px;
  background: #d9d9d9;
}

.listing {
  display: flex;
  flex: 1;
  flex-direction: column;
  justify-content: space-between;
}

.files {
  width: 100%;
  border-collapse: separate;
  border-spacing: 0;
  table-layout: fixed;
}

.files td,
.files th {
  height: 21px;
  padding: 0;
}

.files th {
  width: 77px;
  height: 32px;
  padding: 0 0 6px 6px;
  font-weight: 400;
  text-align: left;
  color: #4c607a;
  border-left: 1px solid #e5e5e5;
}

.files .edge {
  width: 12px;
  background: #fff;
}

.files thead .edge {
  background: linear-gradient(#e5e5e5, #e5e5e5) 3px 0 / 1px 26px no-repeat;
}

.files .size {
  padding-right: 4px;
  text-align: right;
  color: #6d6d6d;
}

.files .selected {
  background: #d9d9d9;
}

.hscroll {
  display: flex;
  height: 15px;
  background: #f0f0f0;
}

.thumb {
  flex: 1;
  background: #cdcdcd;
}

.hscroll svg {
  width: 19px;
  height: 15px;
}

.status {
  display: flex;
  align-items: center;
  justify-content: space-between;
  height: 24px;
  padding: 0 4px 0 14px;
  color: #1e395b;
}

.views {
  display: flex;
}

.view {
  display: grid;
  place-items: center;
  width: 22px;
  height: 22px;
}

.view.active {
  background: #cbeaf5;
  border: 1px solid #4aa5c8;
}

.view svg {
  width: 18px;
  height: 14px;
}

/* ── Launcher ───── */
.launcher {
  position: absolute;
  inset: 115px 308px 76px 308px;
  display: flex;
  flex-direction: column;
  gap: 20px;
  padding: 41px 37px 25px 41px;
  font-family: Inter, 'Liberation Sans', sans-serif;
  font-size: 13px;
  color: #a3a3a3;
  background: linear-gradient(135deg, #20150f 0%, #100d0b 30%, #0f0d0b 60%, #21150f 100%);
  border: 1px solid #4d4b49;
  border-radius: 15px;
  overflow: hidden;
}

.boards {
  display: grid;
  grid-template-columns: 276fr 284fr;
  gap: 24px;
  flex: 1;
  min-height: 0;
}

.card {
  padding: 0 16px;
  background: #0a0a0a;
  border-radius: 5px;
}

.news {
  overflow: hidden;
  border-radius: 5px 5px 0 0;
}

.card-head {
  display: flex;
  align-items: center;
  gap: 10px;
  height: 42px;
  margin: 0;
  padding-left: 1px;
  font-size: 13px;
  font-weight: 500;
}

.card-head svg {
  width: 20px;
  height: 20px;
  color: #a94f24;
}

.rule {
  height: 1px;
  margin: 6px 28px 0 29px;
  background: #a4552b;
}

.news .rule {
  margin: 6px 30px 21px 29px;
}

.post {
  height: 115px;
  margin-bottom: 15px;
  padding: 10px 13px 0 11px;
  background: #070707;
  border-radius: 5px;
}

.post-head {
  display: flex;
  align-items: center;
  justify-content: space-between;
  height: 22px;
}

.post h3 {
  margin: 0;
  font-size: 16px;
  font-weight: 400;
}

.ring {
  width: 12px;
  height: 12px;
  border: 2px solid #3a3a3a;
  border-radius: 50%;
}

.latest .ring {
  border-color: #b5552a;
  box-shadow: 0 0 6px rgba(169, 79, 36, 0.4);
}

.post ul {
  margin-top: 10px;
  padding-left: 6px;
}

.post li {
  display: flex;
  align-items: center;
  gap: 6px;
  font-weight: 500;
  line-height: 20px;
}

.post li svg {
  width: 7px;
  height: 12px;
  fill: none;
  stroke: #3a3a3a;
  stroke-width: 1.5;
}

.latest li svg {
  stroke: #b5552a;
}

.side {
  display: flex;
  flex-direction: column;
  gap: 20px;
}

.help-card {
  padding-bottom: 15px;
}

.help-card .rule {
  margin-bottom: 31px;
}

.ebook-card {
  padding-bottom: 14px;
}

.ebook-card .rule {
  margin-bottom: 17px;
}

.action {
  display: grid;
  grid-template-columns: 1fr auto 1fr;
  align-items: center;
  justify-items: center;
  width: 100%;
  height: 45px;
  font-weight: 500;
  color: #e6d5ca;
  background: #79391a;
  border-radius: 5px;
}

.discord {
  grid-column: 2;
  width: 24px;
  height: 19px;
}

.launch-text {
  grid-column: 2;
}

.arrow {
  width: 13px;
  height: 11px;
}

.dock {
  display: flex;
  justify-content: center;
  gap: 18px;
  padding-right: 7px;
}

.dock button {
  display: flex;
  align-items: center;
  justify-content: center;
  gap: 7px;
  width: 46px;
  height: 46px;
  color: #bb7650;
  background: #7a3a1a;
  border: 1px solid #9c5230;
  border-radius: 5px;
}

.dock .current {
  width: 115px;
  font-size: 16px;
  font-weight: 500;
  color: #fff;
}

.dock svg {
  width: 20px;
  height: 20px;
  fill: none;
  stroke: currentColor;
  stroke-width: 1.5;
  stroke-linecap: round;
  stroke-linejoin: round;
}

.dock .current svg {
  color: #f58b55;
}

/* ── Watermark ───── */
.watermark {
  position: absolute;
  right: 49px;
  bottom: 8px;
  display: flex;
  align-items: center;
  gap: 6px;
  font-family: 'Liberation Sans Narrow', 'Roboto Condensed', 'Liberation Sans', sans-serif;
  font-size: 38px;
  line-height: 62px;
  color: #b4d2ff;
  opacity: 0.6;
}

.watermark svg {
  width: 54px;
  height: 62px;
}

/* ── Taskbar ───── */
.taskbar {
  display: flex;
  height: 40px;
  background: linear-gradient(90deg, #02141f, #03131f 60%, #040c1e);
}

.task {
  display: grid;
  place-items: center;
  width: 48px;
  height: 40px;
}

.start svg {
  width: 16px;
  height: 16px;
}

.search {
  display: flex;
  align-items: center;
  width: 288px;
  padding-left: 13px;
  background: #f2f2f2;
  border: 1px solid #c8c8c8;
}

.lens {
  width: 16px;
  height: 16px;
  margin-right: 10px;
}

.search input {
  flex: 1;
  min-width: 0;
  font-size: 14px;
}

.search input::placeholder {
  color: #333;
  opacity: 1;
}

.flowers {
  width: 80px;
  height: 38px;
}

.view-tasks svg {
  width: 18px;
  height: 16px;
}

.apps {
  display: flex;
  gap: 1px;
  padding-left: 3px;
}

.app-icon {
  width: 24px;
  height: 24px;
}

.running {
  background: linear-gradient(#76b9ed, #76b9ed) center bottom / 40px 2px no-repeat;
}

.focused {
  background: linear-gradient(#76b9ed, #76b9ed) center bottom / 48px 2px no-repeat #3b4b55;
}

.tray {
  display: flex;
  align-items: center;
  gap: 8px;
  margin: 0 4px 0 auto;
  padding-right: 19px;
  border-right: 1px solid #4f5768;
  color: #fff;
}

.tray svg {
  width: 16px;
  height: 16px;
  fill: none;
  stroke: #fff;
}

.clock {
  display: flex;
  flex-direction: column;
  width: 56px;
  line-height: 18px;
  text-align: center;
}

.tray .note {
  width: 18px;
  height: 18px;
  margin-left: 7px;
}
</style>
